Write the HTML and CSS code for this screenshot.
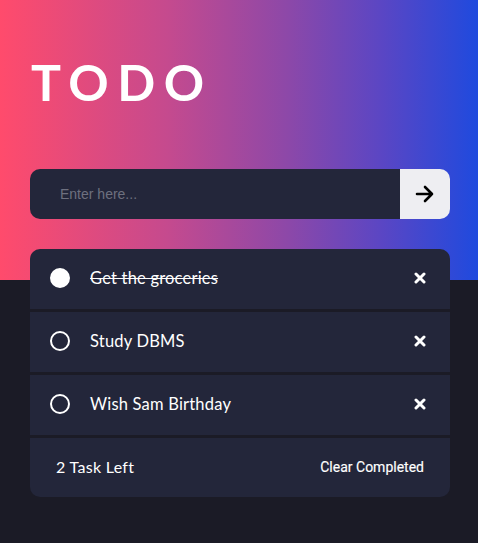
FILE: index.html
```html
<!DOCTYPE html>
<html>
<head>
<meta charset="utf-8">
<link rel="stylesheet" href="styles.css">
</head>
<body>
<div class="hero"></div>
<main class="app">
  <h1 class="title">TODO</h1>
  <form class="add">
    <input class="add-input" type="text" placeholder="Enter here...">
    <button class="add-btn" type="button" aria-label="Add">
      <svg width="20" height="18" viewBox="0 0 20 18"><path d="M2 9h15M10 2l7 7-7 7" fill="none" stroke="#000" stroke-width="2.6" stroke-linecap="round" stroke-linejoin="round"/></svg>
    </button>
  </form>
  <ul class="list">
    <li class="item done">
      <span class="check"></span>
      <span class="text">Get the groceries</span>
      <span class="del"><svg width="12" height="12" viewBox="0 0 12 12"><path d="M2 2l8 8M10 2l-8 8" stroke="#fff" stroke-width="3" stroke-linecap="round"/></svg></span>
    </li>
    <li class="item">
      <span class="check"></span>
      <span class="text">Study DBMS</span>
      <span class="del"><svg width="12" height="12" viewBox="0 0 12 12"><path d="M2 2l8 8M10 2l-8 8" stroke="#fff" stroke-width="3" stroke-linecap="round"/></svg></span>
    </li>
    <li class="item">
      <span class="check"></span>
      <span class="text">Wish Sam Birthday</span>
      <span class="del"><svg width="12" height="12" viewBox="0 0 12 12"><path d="M2 2l8 8M10 2l-8 8" stroke="#fff" stroke-width="3" stroke-linecap="round"/></svg></span>
    </li>
    <li class="footer">
      <span class="left">2 Task Left</span>
      <span class="clear">Clear Completed</span>
    </li>
  </ul>
</main>
</body>
</html>
```
FILE: styles.css
```css
* { box-sizing: border-box; }
html, body { margin: 0; padding: 0; }
body {
  background: #1b1b26;
  min-height: 543px;
  font-family: "Lato", "Open Sans", sans-serif;
  position: relative;
}
.hero {
  height: 280px;
  background: linear-gradient(90deg, #ff4b6c 0%, #c54a8e 35%, #8d48a8 60%, #5a46c4 80%, #1f4ade 100%);
}
.app {
  position: absolute;
  top: 0;
  left: 30px;
  width: 420px;
}
.title {
  margin: 56px 0 0 1px;
  font-family: "Lato", sans-serif;
  font-weight: 700;
  font-size: 50px;
  line-height: 52px;
  letter-spacing: 8.5px;
  color: #fff;
}
.add {
  margin-top: 61px;
  display: flex;
  height: 50px;
  border-radius: 10px;
  overflow: hidden;
}
.add-input {
  flex: 1;
  border: 0;
  outline: 0;
  background: #23263a;
  color: #fff;
  padding: 0 0 0 30px;
  font-family: "Liberation Sans", Arial, sans-serif;
  font-size: 14px;
}
.add-input::placeholder { color: #6e707f; }
.add-btn {
  width: 50px;
  border: 0;
  background: #eeeef2;
  display: flex;
  align-items: center;
  justify-content: center;
  padding: 0;
}
.list {
  list-style: none;
  margin: 30px 0 0;
  padding: 0;
  display: flex;
  flex-direction: column;
  gap: 3px;
  border-radius: 10px;
  overflow: hidden;
}
.item, .footer {
  background: #23263a;
  height: 60px;
  display: flex;
  align-items: center;
}
.item { padding: 0 24px 2px 20px; }
.check {
  width: 20px;
  height: 20px;
  border: 2px solid #fff;
  border-radius: 50%;
  flex: none;
}
.done .check { background: #fff; }
.text {
  flex: 1;
  margin-left: 20px;
  color: #fff;
  font-size: 16.5px;
  letter-spacing: 0.2px;
}
.done .text { text-decoration: line-through; }
.del { display: flex; width: 12px; height: 12px; }
.footer {
  height: 59px;
  justify-content: space-between;
  padding: 0 26px 2px 26px;
  color: #fff;
}
.left { font-size: 16px; letter-spacing: 0.3px; }
.clear {
  font-family: "Roboto", sans-serif;
  font-size: 14px;
  font-weight: 400;
  -webkit-text-stroke: 0.15px #fff;
}
```
